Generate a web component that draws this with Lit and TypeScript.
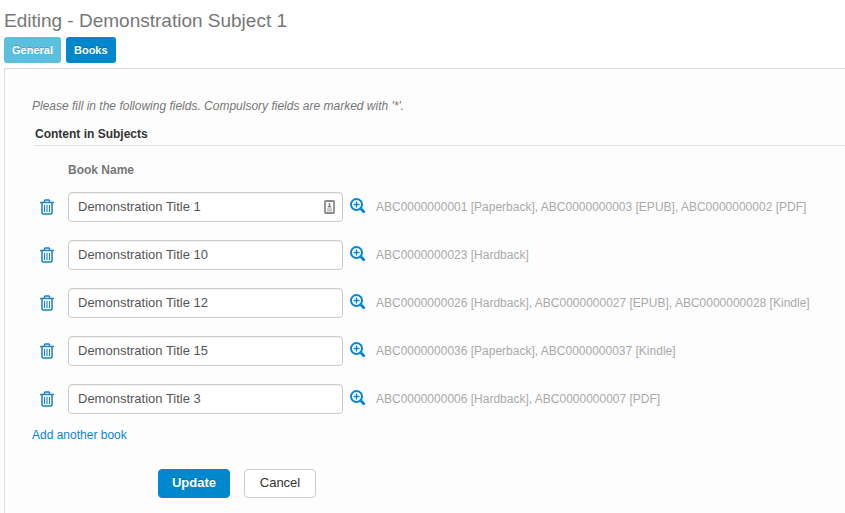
import { LitElement, html, css, svg, nothing } from "lit";
import { customElement } from "lit/decorators.js";

interface Book {
  title: string;
  editions: string;
  autofill?: boolean;
}

const books: Book[] = [
  {
    title: "Demonstration Title 1",
    editions: "ABC0000000001 [Paperback], ABC0000000003 [EPUB], ABC0000000002 [PDF]",
    autofill: true,
  },
  { title: "Demonstration Title 10", editions: "ABC0000000023 [Hardback]" },
  {
    title: "Demonstration Title 12",
    editions: "ABC0000000026 [Hardback], ABC0000000027 [EPUB], ABC0000000028 [Kindle]",
  },
  { title: "Demonstration Title 15", editions: "ABC0000000036 [Paperback], ABC0000000037 [Kindle]" },
  { title: "Demonstration Title 3", editions: "ABC0000000006 [Hardback], ABC0000000007 [PDF]" },
];

const trashIcon = html`<svg width="14" height="16" viewBox="0 0 14 16" aria-hidden="true">
  ${svg`<g fill="none" stroke="#1583cc">
    <path d="M4.5 3V1.8Q4.5 1 5.3 1h3.4q.8 0 .8.8V3" stroke-width="1.4"/>
    <path d="M0 3.5h14" stroke-width="1.4"/>
    <path d="M2 4v9.8q0 1.2 1.2 1.2h7.6q1.2 0 1.2-1.2V4" stroke-width="1.5"/>
    <path d="M4.5 6v7M7 6v7M9.5 6v7" stroke-width="1.1"/>
  </g>`}
</svg>`;

const zoomIcon = html`<svg width="16" height="16" viewBox="0 0 16 16" aria-hidden="true">
  ${svg`<g fill="none" stroke="#0088cc">
    <circle cx="6.5" cy="6.5" r="5.5" stroke-width="2"/>
    <path d="M6.5 3.5v6M3.5 6.5h6" stroke-width="1.4"/>
    <path d="M10.6 10.6l3.2 3.2" stroke-width="2.8" stroke-linecap="round"/>
  </g>`}
</svg>`;

const autofillIcon = html`<svg class="autofill" width="11" height="14" viewBox="0 0 11 14" aria-hidden="true">
  ${svg`<rect x="1" y="1" width="9" height="12" rx=".5" fill="#fff" stroke="#8c8c8c" stroke-width="1.8"/>
    <path d="M4.7 3h1.6v2.2l1 1.3v1H3.7v-1l1-1.3z" fill="#8c8c8c"/>
    <path d="M3 9h5M3 10.8h5" stroke="#a0a0a0"/>`}
</svg>`;

@customElement("app-root")
export class AppRoot extends LitElement {
  static styles = css`
    :host {
      display: flex;
      flex-direction: column;
      box-sizing: border-box;
      min-height: 100vh;
      padding: 10px 0 0 4px;
      background: #fff;
      color: #777;
      font: 12px/20px "Liberation Sans", Arial, sans-serif;
    }
    *, *::before, *::after { box-sizing: border-box; }
    button, input { font-family: inherit; }
    button { cursor: pointer; }
    h1 {
      margin: 0;
      font-size: 19px;
      line-height: 22px;
      font-weight: normal;
    }
    .tabs {
      display: flex;
      gap: 5px;
      margin: 5px 0;
    }
    .tab {
      height: 26px;
      padding: 0 8px;
      border: 0;
      border-radius: 3px;
      background: #5bc0de;
      color: #fff;
      font-size: 11px;
      font-weight: bold;
      text-shadow: 0 -1px 0 rgba(0, 0, 0, 0.2);
    }
    .tab.current { background: #0088cc; }
    .panel {
      flex: 1;
      padding: 27px 0 14px 27px;
      border: solid #ddd;
      border-width: 1px 0 0 1px;
      background: #fdfdfd;
    }
    .hint {
      margin: 0;
      font-style: italic;
    }
    h2 {
      margin: 8px 0 0 2px;
      padding: 0 1px 1px;
      border-bottom: 1px solid #e0e0e0;
      color: #333;
      font-size: 12px;
      line-height: 20px;
    }
    .column {
      margin: 14px 0 12px 36px;
      font-weight: bold;
    }
    .books {
      display: grid;
      gap: 18px;
    }
    .book {
      display: grid;
      grid-template-columns: 29px 275px 16px minmax(0, 1fr);
      column-gap: 7px;
      align-items: center;
    }
    .icon {
      display: flex;
      justify-content: center;
      padding: 0;
      border: 0;
      background: none;
    }
    .lookup { padding-bottom: 2px; }
    .field {
      display: flex;
      position: relative;
    }
    .field input {
      width: 100%;
      height: 30px;
      padding: 0 9px 2px;
      border: 1px solid #ccc;
      border-radius: 4px;
      background: #fff;
      color: #555;
      font-size: 13px;
      box-shadow: inset 0 1px 1px rgba(0, 0, 0, 0.075);
    }
    .autofill {
      position: absolute;
      right: 8px;
      top: 8px;
    }
    .editions {
      padding-left: 3px;
      color: #aaa;
    }
    .add {
      display: inline-block;
      margin-top: 11px;
      color: #0e83cd;
      text-decoration: none;
    }
    .actions {
      display: flex;
      gap: 14px;
      margin: 24px 0 0 126px;
    }
    .action {
      width: 72px;
      height: 29px;
      padding: 0 0 2px;
      border: 1px solid #ccc;
      border-radius: 4px;
      background: #fff;
      color: #333;
      font-size: 13px;
    }
    .action.primary {
      border-color: #0088cc;
      background: #0088cc;
      color: #fff;
      font-weight: bold;
      text-shadow: 0 -1px 0 rgba(0, 0, 0, 0.2);
    }
  `;

  private renderBook(book: Book) {
    return html`<div class="book">
      <button class="icon" type="button" aria-label="Remove ${book.title}">${trashIcon}</button>
      <div class="field">
        <input type="text" aria-labelledby="book-name" .value=${book.title} />
        ${book.autofill ? autofillIcon : nothing}
      </div>
      <button class="icon lookup" type="button" aria-label="Look up ${book.title}">${zoomIcon}</button>
      <span class="editions">${book.editions}</span>
    </div>`;
  }

  render() {
    return html`
      <h1>Editing - Demonstration Subject 1</h1>
      <nav class="tabs">
        <button class="tab" type="button">General</button>
        <button class="tab current" type="button" aria-current="page">Books</button>
      </nav>
      <form class="panel" @submit=${(e: Event) => e.preventDefault()}>
        <p class="hint">Please fill in the following fields. Compulsory fields are marked with '*'.</p>
        <h2>Content in Subjects</h2>
        <div class="column" id="book-name">Book Name</div>
        <div class="books">${books.map((book) => this.renderBook(book))}</div>
        <a class="add" href="#">Add another book</a>
        <div class="actions">
          <button class="action primary" type="submit">Update</button>
          <button class="action" type="button">Cancel</button>
        </div>
      </form>
    `;
  }
}
